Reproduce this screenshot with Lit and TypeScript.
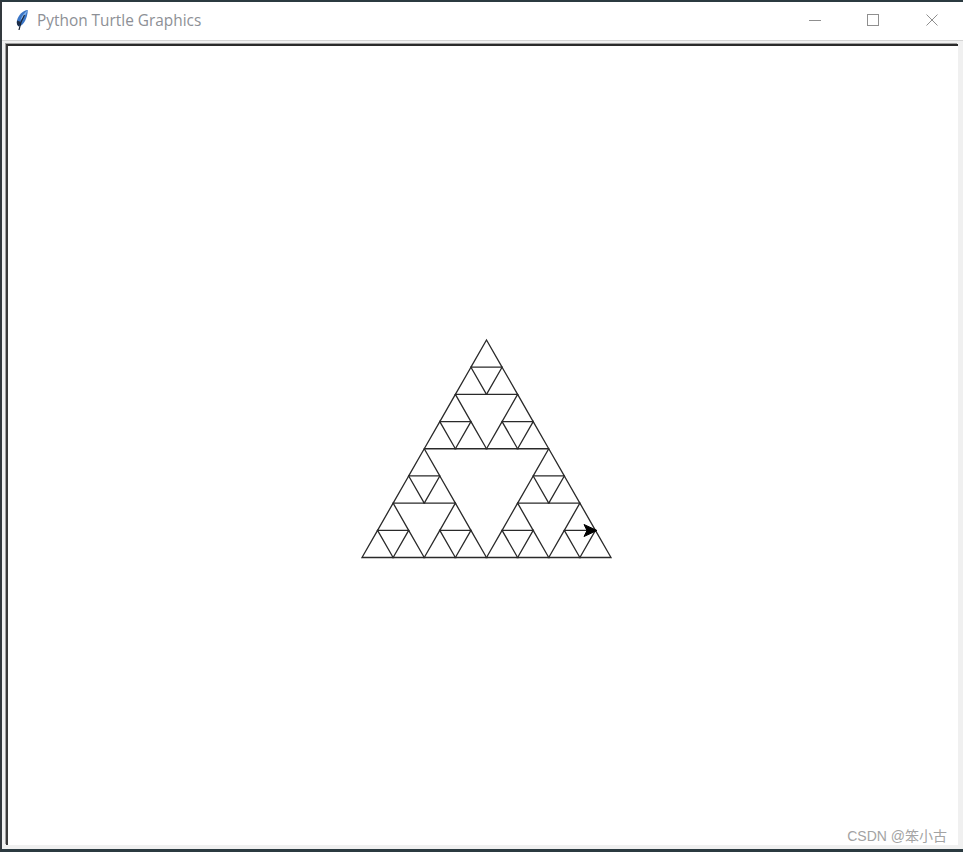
import { LitElement, html, css, svg } from "lit";
import { customElement } from "lit/decorators.js";

type Pt = [number, number];

// only the smallest triangles: their edges make up the bigger ones as well
function sierpinski(a: Pt, b: Pt, c: Pt, depth: number): string[] {
  if (depth === 0) return [`${a[0]},${a[1]} ${b[0]},${b[1]} ${c[0]},${c[1]}`];
  const mid = (p: Pt, q: Pt): Pt => [(p[0] + q[0]) / 2, (p[1] + q[1]) / 2];
  const ab = mid(a, b);
  const bc = mid(b, c);
  const ca = mid(c, a);
  return [
    ...sierpinski(a, ab, ca, depth - 1),
    ...sierpinski(ab, b, bc, depth - 1),
    ...sierpinski(ca, bc, c, depth - 1),
  ];
}

// canvas starts at 8,46 so the points are page coords minus that
const triangles = sierpinski([354, 511.5], [603, 511.5], [478.5, 294], 3);

@customElement("app-root")
export class AppRoot extends LitElement {
  static styles = css`
    :host {
      display: flex;
      flex-direction: column;
      width: 963px;
      height: 852px;
      box-sizing: border-box;
      background: #f0f0f0;
      border-top: 2px solid #2b3a40;
      border-left: 2px solid #33393e;
      border-bottom: 3px solid #2b3a40;
      overflow: hidden;
    }
    .titlebar {
      display: flex;
      align-items: center;
      height: 38px;
      flex: none;
      background: #fff;
      border-bottom: 1px solid #d4d4d4;
    }
    .feather {
      width: 14px;
      height: 22px;
      margin-left: 13px;
      margin-top: -2px;
      flex: none;
    }
    .title {
      margin-left: 8px;
      margin-top: -2px;
      font: 15.4px "Open Sans", "Noto Sans", sans-serif;
      color: #8d9096;
      white-space: nowrap;
    }
    .buttons {
      display: flex;
      margin-left: auto;
      margin-right: 2px;
      margin-top: -2px;
    }
    .btn {
      width: 58.5px;
      height: 36px;
      display: flex;
      align-items: center;
      justify-content: center;
    }
    .btn svg {
      width: 12px;
      height: 12px;
    }
    .body {
      flex: 1;
      display: flex;
      min-height: 0;
      padding: 3px 5px 4px 4px;
      background: #f0f0f0;
    }
    .canvas {
      flex: 1;
      background: #fff;
      border-top: 2px solid #2a2a2a;
      border-left: 2px solid #3a3a3a;
      box-shadow: -1px -1px 0 #a0a0a0;
      position: relative;
    }
    .canvas svg {
      display: block;
      width: 950px;
      height: 798px;
    }
    .watermark {
      position: absolute;
      right: 11px;
      bottom: 0;
      font: 14px "Liberation Sans", "Noto Sans CJK SC", sans-serif;
      color: #a3a3a3;
      white-space: nowrap;
    }
  `;

  render() {
    return html`
      <div class="titlebar">
        <svg class="feather" viewBox="0 0 14 22">
          <path d="M12.8 1 C8 1.5 3.5 5.5 2 11.5 C1.5 14.5 2 16.5 4 17.5 C9 16 12.5 9 12.8 1 Z" fill="#3a75c6" />
          <path d="M12.5 1.5 C9.5 3.5 6.5 7 5.5 11 C7.5 9.5 11 6 12.5 1.5 Z" fill="#84b4ea" />
          <path d="M9.5 6 C7 10 5 15 4 21" fill="none" stroke="#1b2433" stroke-width="1.2" />
          <path d="M2 11.5 C1.5 14.5 2 16.5 4 17.5 L6 13 Z" fill="#1d2c46" />
        </svg>
        <span class="title">Python Turtle Graphics</span>
        <div class="buttons">
          <div class="btn">
            <svg viewBox="0 0 12 12"><path d="M0 6.5H12" stroke="#8f8f8f" fill="none" /></svg>
          </div>
          <div class="btn">
            <svg viewBox="0 0 12 12"><rect x=".5" y=".5" width="11" height="11" stroke="#8f8f8f" fill="none" /></svg>
          </div>
          <div class="btn">
            <svg viewBox="0 0 12 12"><path d="M.5 .5L11.5 11.5M11.5 .5L.5 11.5" stroke="#8f8f8f" fill="none" /></svg>
          </div>
        </div>
      </div>
      <div class="body">
        <div class="canvas">
          <svg viewBox="0 0 950 798">
            ${triangles.map(
              (p) => svg`<polygon points=${p} fill="none" stroke="#2a2a2a" stroke-width="1.3" />`
            )}
            <polygon points="589,484.5 576,478.5 579,484.5 576,490.5" fill="#000" stroke="#000" stroke-width="1" />
          </svg>
          <span class="watermark">CSDN @笨小古</span>
        </div>
      </div>
    `;
  }
}
